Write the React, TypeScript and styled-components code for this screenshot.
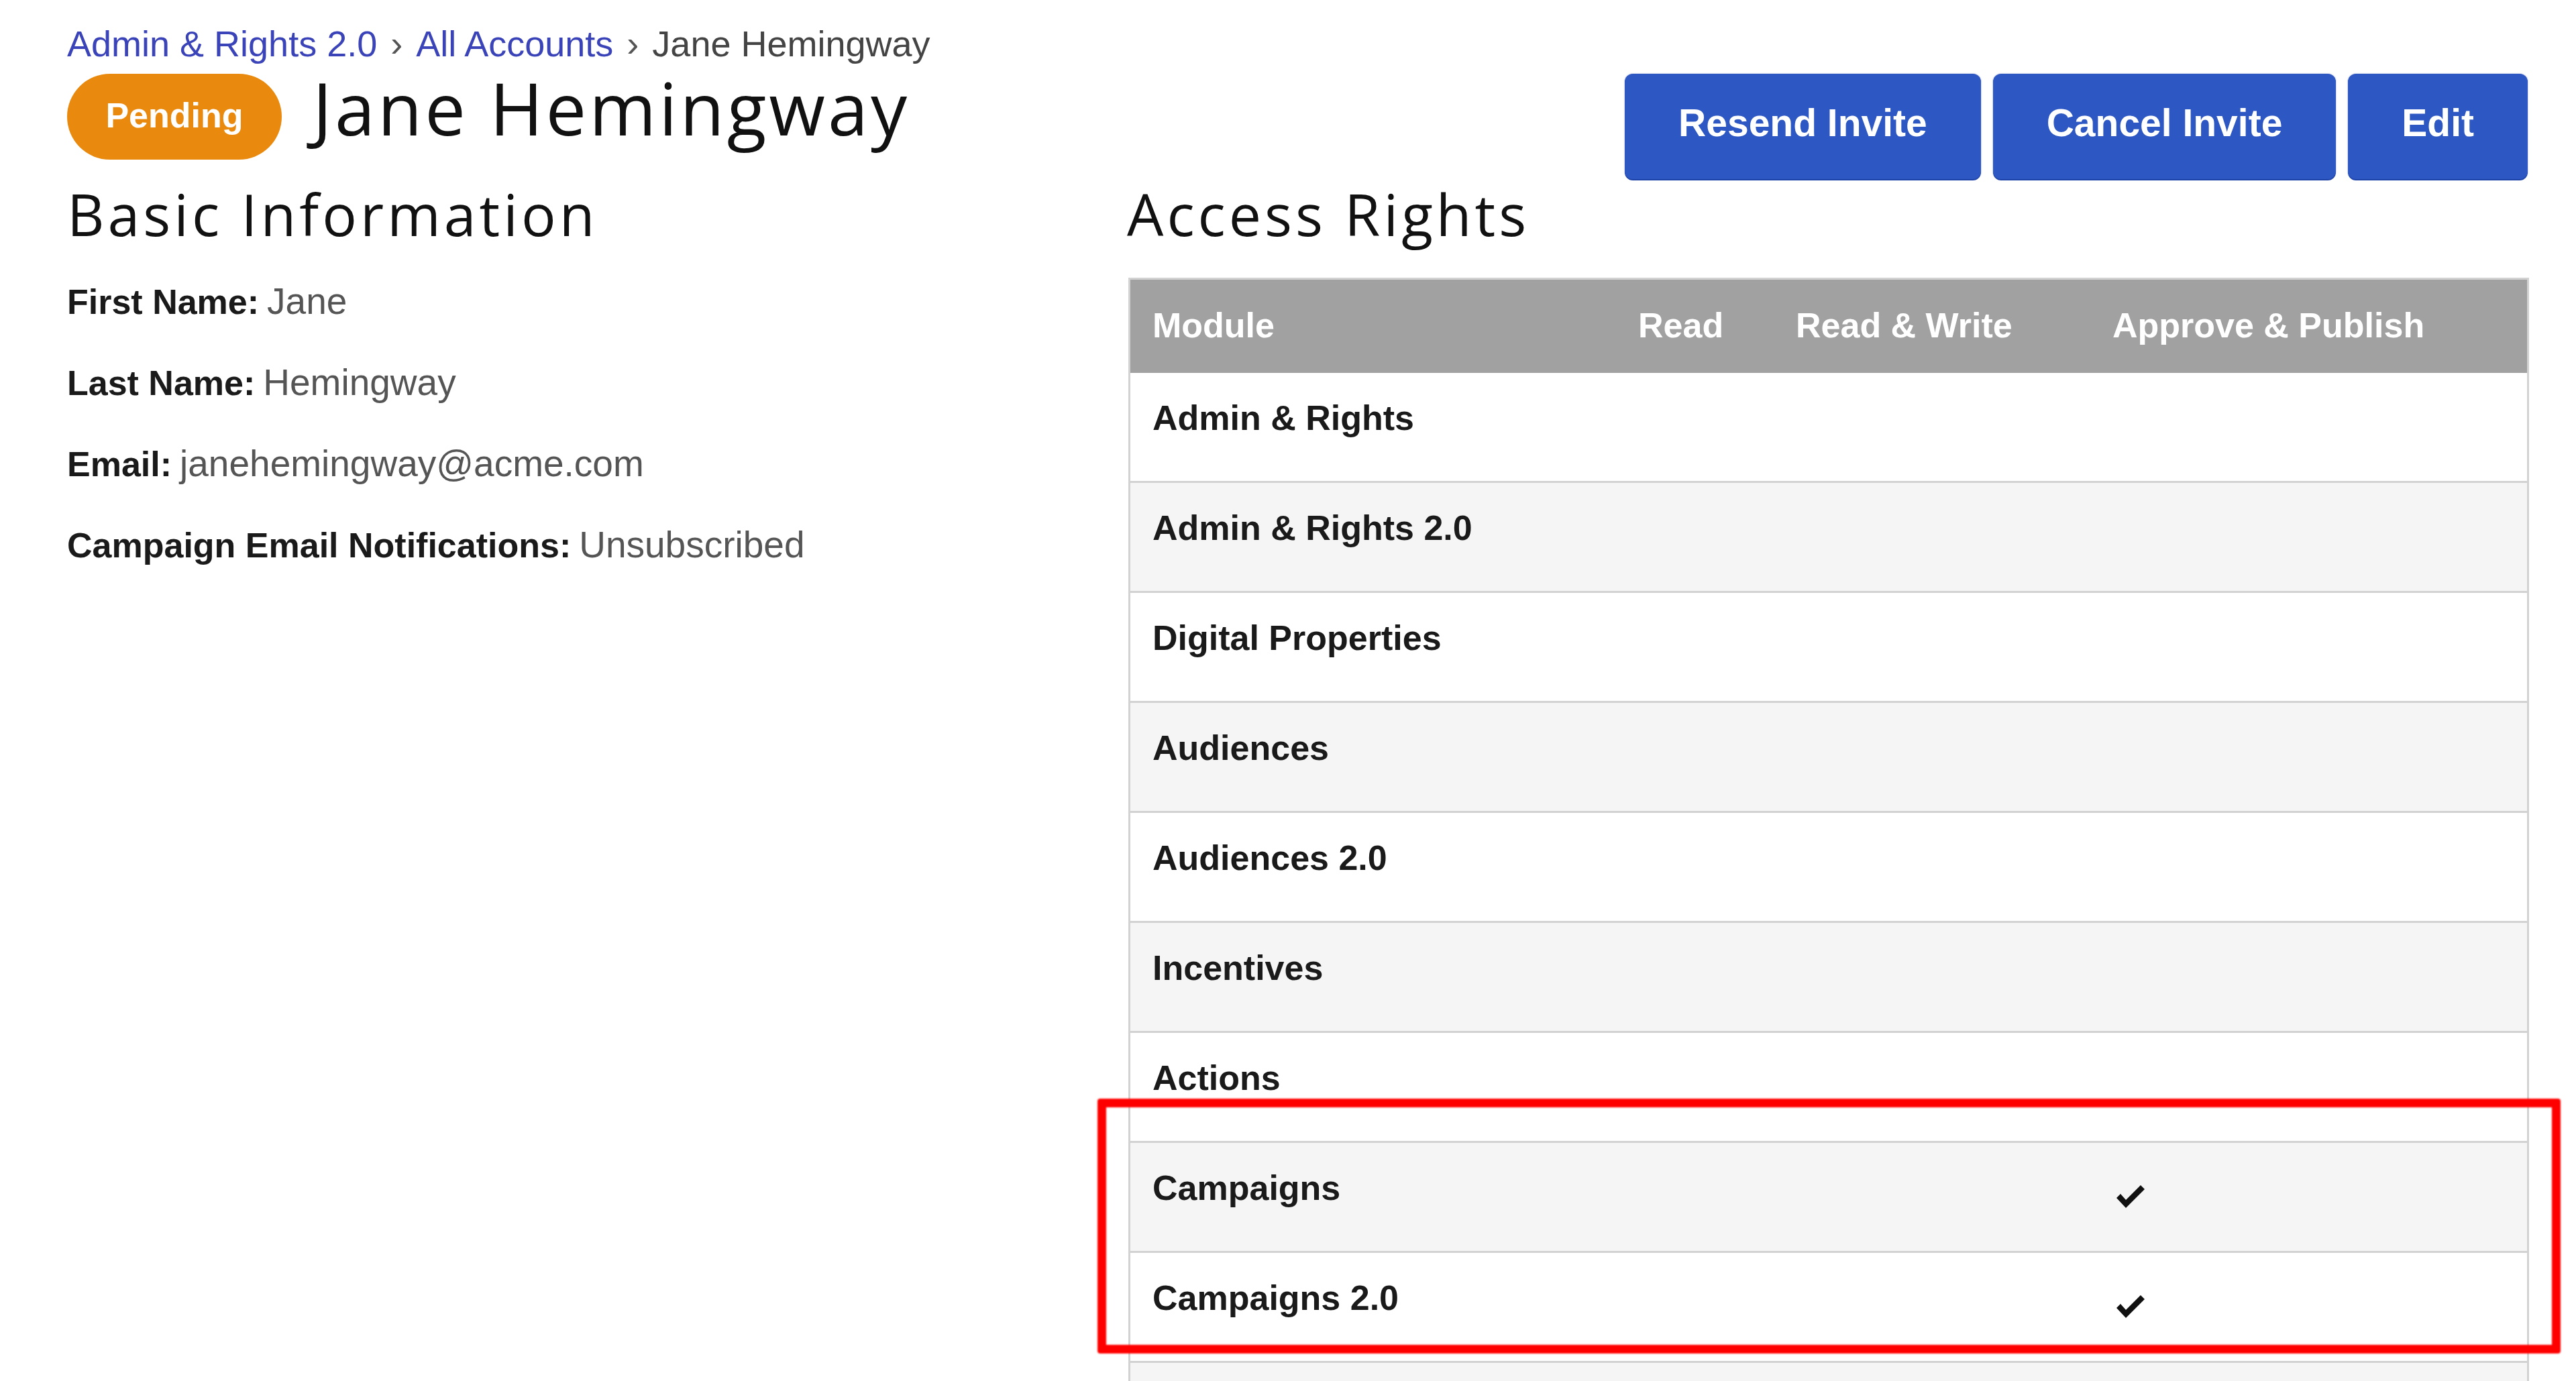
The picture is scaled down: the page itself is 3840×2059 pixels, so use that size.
import styled, { createGlobalStyle } from "styled-components";

const modules = [
  { name: "Admin & Rights", approve: false },
  { name: "Admin & Rights 2.0", approve: false },
  { name: "Digital Properties", approve: false },
  { name: "Audiences", approve: false },
  { name: "Audiences 2.0", approve: false },
  { name: "Incentives", approve: false },
  { name: "Actions", approve: false },
  { name: "Campaigns", approve: true },
  { name: "Campaigns 2.0", approve: true },
  { name: "", approve: false },
];

const fields = [
  { label: "First Name:", value: "Jane" },
  { label: "Last Name:", value: "Hemingway" },
  { label: "Email:", value: "janehemingway@acme.com" },
  { label: "Campaign Email Notifications:", value: "Unsubscribed" },
];

const GlobalStyle = createGlobalStyle`
  html, body {
    margin: 0;
    padding: 0;
    background: #ffffff;
    overflow: hidden;
  }
  body {
    font-family: "Liberation Sans", Arial, sans-serif;
    color: #1a1a1a;
  }
`;

const Page = styled.div`
  padding: 33px 72px 0 100px;
`;

const Breadcrumb = styled.nav`
  display: flex;
  align-items: baseline;
  gap: 20px;
  font-size: 54px;
  line-height: 65px;
  color: #444444;
  white-space: nowrap;
`;

const Crumb = styled.a`
  color: #3a44b8;
  text-decoration: none;
`;

const Sep = styled.span`
  color: #555555;
`;

const TopRow = styled.div`
  display: flex;
  justify-content: space-between;
  align-items: flex-start;
  margin-top: 12px;
`;

const TitleGroup = styled.div`
  display: flex;
  align-items: center;
  gap: 46px;
  height: 128px;
`;

const Badge = styled.span`
  display: inline-flex;
  align-items: center;
  justify-content: center;
  box-sizing: border-box;
  width: 320px;
  height: 128px;
  padding-bottom: 4px;
  border-radius: 64px;
  background: #e98a0f;
  color: #ffffff;
  font-size: 52px;
  font-weight: 700;
`;

const Title = styled.h1`
  margin: 0;
  padding-bottom: 26px;
  font-family: "Open Sans", sans-serif;
  font-weight: 400;
  font-size: 108px;
  line-height: 1;
  letter-spacing: 4px;
  color: #111111;
`;

const Buttons = styled.div`
  display: flex;
  gap: 18px;
`;

const Button = styled.button`
  height: 157px;
  padding: 0 80px 12px;
  border: none;
  border-radius: 12px;
  background: #2d57c3;
  box-shadow: 0 2px 0 #1d43a9, 0 0 2px rgba(20, 50, 150, 0.5);
  color: #ffffff;
  font-family: "Liberation Sans", Arial, sans-serif;
  font-size: 57px;
  font-weight: 700;
  cursor: pointer;
`;

const Columns = styled.div`
  display: grid;
  grid-template-columns: 1580px 1fr;
`;

const Section = styled.section`
  display: flex;
  flex-direction: column;
`;

const Heading = styled.h2`
  margin: 9px 0 0;
  font-family: "Open Sans", sans-serif;
  font-weight: 400;
  font-size: 86px;
  line-height: 1;
  letter-spacing: 5px;
  color: #111111;
`;

const FieldList = styled.div`
  display: flex;
  flex-direction: column;
  gap: 58px;
  margin-top: 56px;
`;

const Field = styled.div`
  font-size: 55px;
  line-height: 62px;
  color: #555555;
  white-space: nowrap;
`;

const FieldLabel = styled.strong`
  font-size: 52px;
  color: #1a1a1a;
  font-weight: 700;
  margin-right: 12px;
`;

const TableWrap = styled.div`
  position: relative;
  margin-top: 52px;
  margin-left: 2px;
  margin-right: -2px;
`;

const Table = styled.div`
  border: 3px solid #d2d2d2;
  border-bottom: none;
`;

const cols = "724px 235px 472px 1fr";

const HeadRow = styled.div`
  display: grid;
  grid-template-columns: ${cols};
  align-items: center;
  height: 139px;
  padding-bottom: 4px;
  box-sizing: border-box;
  background: #a1a1a1;
`;

const HeadCell = styled.div`
  padding-left: 33px;
  color: #ffffff;
  font-size: 52px;
  font-weight: 700;
  white-space: nowrap;
`;

const Row = styled.div<{ $shade: boolean }>`
  display: grid;
  grid-template-columns: ${cols};
  align-items: start;
  box-sizing: border-box;
  height: 164px;
  padding-top: 36px;
  border-bottom: 3px solid #d2d2d2;
  background: ${(p) => (p.$shade ? "#f5f5f5" : "#ffffff")};
`;

const Cell = styled.div`
  padding-left: 33px;
  font-size: 52px;
  line-height: 62px;
  font-weight: 700;
  color: #1a1a1a;
  white-space: nowrap;
`;

const CheckCell = styled.div`
  padding-left: 38px;
  padding-top: 26px;
`;

// annotation frame drawn over the campaign rows
const Highlight = styled.div`
  position: absolute;
  left: -46px;
  top: 1224px;
  width: 2181px;
  height: 380px;
  box-sizing: border-box;
  border: 13px solid #ff0000;
  border-radius: 4px;
  filter: blur(0.8px);
  pointer-events: none;
`;

const Check = () => (
  <svg width="44" height="36" viewBox="0 0 44 36">
    <path d="M1 20 L7 14 L15 23 L37 1 L43 7 L15 35 Z" fill="#111111" />
  </svg>
);

export default function App() {
  return (
    <Page>
      <GlobalStyle />
      <Breadcrumb>
        <Crumb href="#">Admin &amp; Rights 2.0</Crumb>
        <Sep>›</Sep>
        <Crumb href="#">All Accounts</Crumb>
        <Sep>›</Sep>
        <span>Jane Hemingway</span>
      </Breadcrumb>

      <TopRow>
        <TitleGroup>
          <Badge>Pending</Badge>
          <Title>Jane Hemingway</Title>
        </TitleGroup>
        <Buttons>
          <Button>Resend Invite</Button>
          <Button>Cancel Invite</Button>
          <Button>Edit</Button>
        </Buttons>
      </TopRow>

      <Columns>
        <Section>
          <Heading>Basic Information</Heading>
          <FieldList>
            {fields.map((f) => (
              <Field key={f.label}>
                <FieldLabel>{f.label}</FieldLabel>
                {f.value}
              </Field>
            ))}
          </FieldList>
        </Section>

        <Section>
          <Heading>Access Rights</Heading>
          <TableWrap>
            <Table>
              <HeadRow>
                <HeadCell>Module</HeadCell>
                <HeadCell>Read</HeadCell>
                <HeadCell>Read &amp; Write</HeadCell>
                <HeadCell>Approve &amp; Publish</HeadCell>
              </HeadRow>
              {modules.map((m, i) => (
                <Row key={i} $shade={i % 2 === 1}>
                  <Cell>{m.name}</Cell>
                  <Cell />
                  <Cell />
                  {m.approve ? (
                    <CheckCell>
                      <Check />
                    </CheckCell>
                  ) : (
                    <Cell />
                  )}
                </Row>
              ))}
            </Table>
            <Highlight />
          </TableWrap>
        </Section>
      </Columns>
    </Page>
  );
}
